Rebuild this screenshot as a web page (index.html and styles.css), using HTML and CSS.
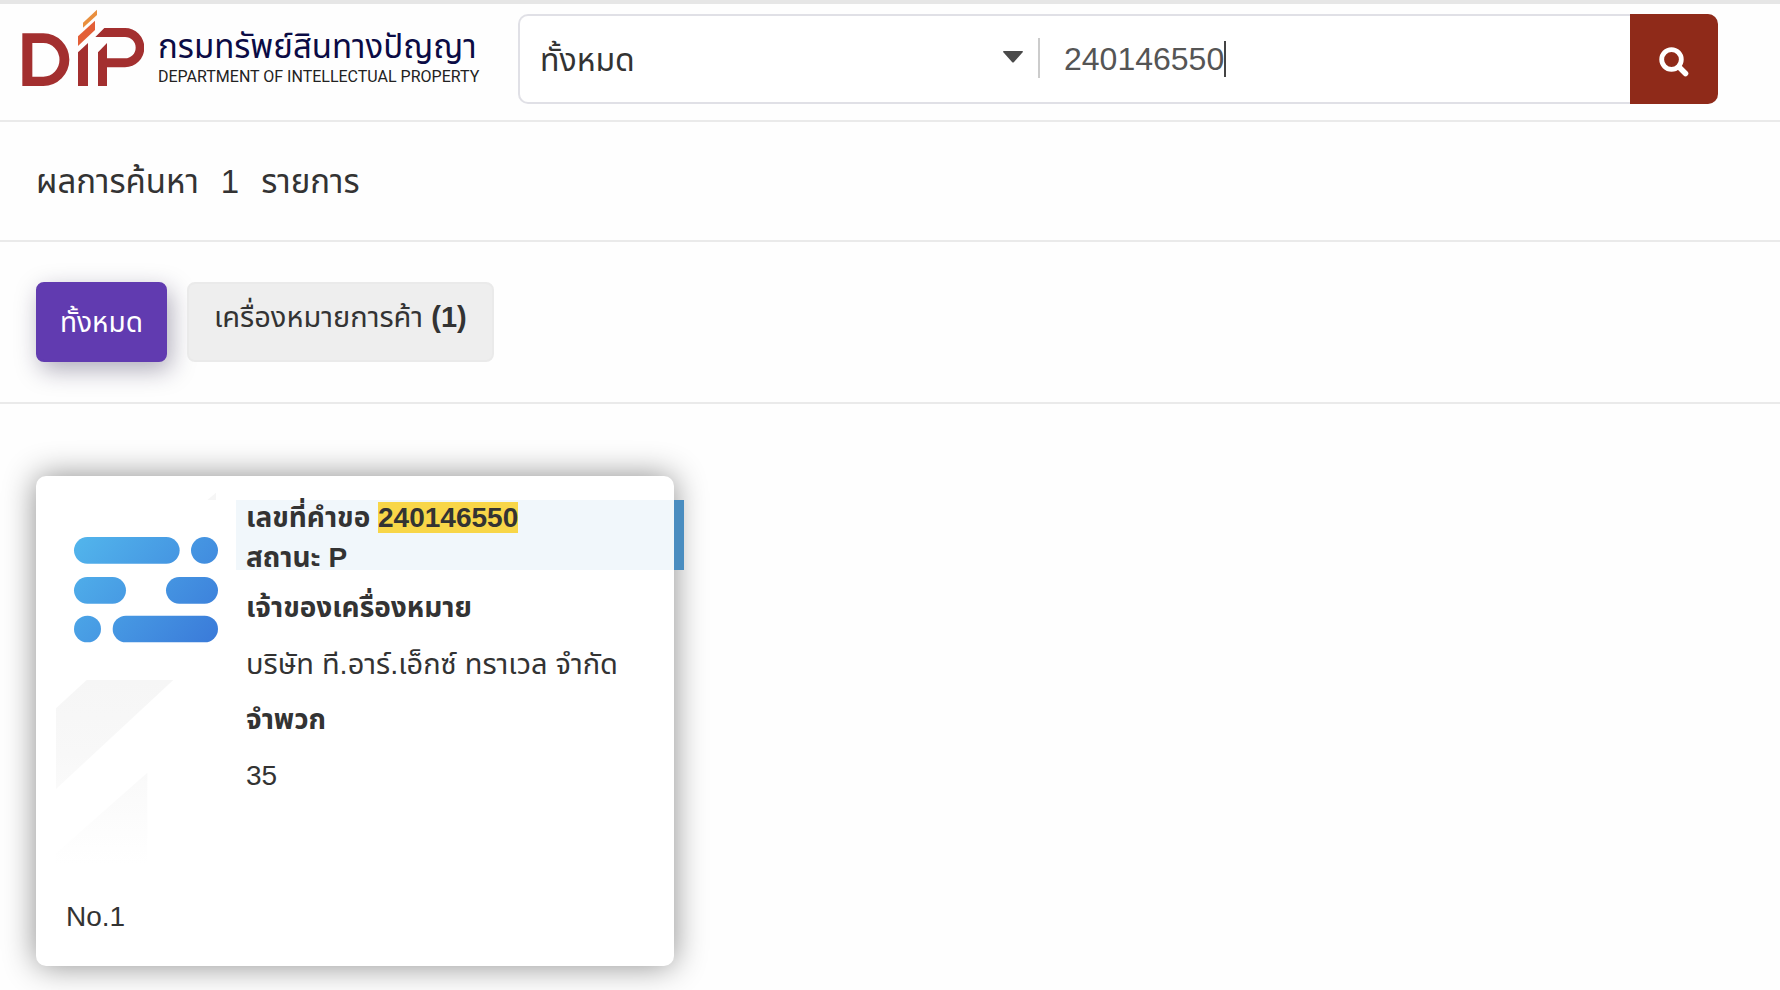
FILE: index.html
```html
<!DOCTYPE html>
<html lang="th">
<head>
    <meta charset="UTF-8">
    <meta name="viewport" content="width=device-width, initial-scale=1.0">
    <title>กรมทรัพย์สินทางปัญญา</title>
    <link rel="stylesheet" href="styles.css">
</head>
<body>
    <header class="header">
        <a class="logo" href="#">
            <svg class="logoMark" viewBox="66 27 366 234" aria-hidden="true">
                <g fill="#a32f2f">
                    <path fill-rule="evenodd" d="M67 100H130A78 79 0 0 1 130 258H67ZM97 129V230H130A48 50 0 0 0 130 129Z"/>
                    <path d="M234 157L264 129V258H234Z"/>
                    <path d="M294 157L321 129V175H375A32 32 0 0 0 375 111H286L313 84H375A58 59 0 0 1 375 202H321V258H294Z"/>
                </g>
                <path fill="#e35f37" d="M234 109L285 62V90L234 138Z"/>
                <path fill="#e98f3e" d="M249 68L291 29V45L249 83Z"/>
            </svg>
            <span class="logoText">
                <span class="logoThai">กรมทรัพย์สินทางปัญญา</span>
                <span class="logoEng">DEPARTMENT OF INTELLECTUAL PROPERTY</span>
            </span>
        </a>
        <form class="search">
            <div class="selectBox">
                <select class="type" aria-label="ประเภท">
                    <option>ทั้งหมด</option>
                </select>
                <svg class="arrow" viewBox="0 0 20 12" aria-hidden="true"><path d="M1 0H19Q21 0 19 2L11 11Q10 12 9 11L1 2Q-1 0 1 0Z" fill="#4a4a4a"/></svg>
            </div>
            <div class="keywordBox">
                <input class="keyword" type="text" value="240146550" aria-label="คำค้นหา">
                <span class="cursor"></span>
            </div>
            <button class="searchBtn" type="submit" aria-label="ค้นหา">
                <svg viewBox="0 0 30 30" aria-hidden="true">
                    <circle cx="12.500" cy="12.500" r="9.800" fill="none" stroke="#fff" stroke-width="4.800"/>
                    <path d="M20 20L26.500 26.500" stroke="#fff" stroke-width="5.500" stroke-linecap="round"/>
                </svg>
            </button>
        </form>
    </header>

    <div class="summary">
        <span>ผลการค้นหา</span>
        <span>1</span>
        <span>รายการ</span>
    </div>

    <nav class="tabs">
        <button class="tab active" type="button">ทั้งหมด</button>
        <button class="tab" type="button">เครื่องหมายการค้า <b>(1)</b></button>
    </nav>

    <main class="results">
        <article class="card">
            <div class="picture">
                <svg viewBox="108 96 486 1116" role="img" aria-label="เครื่องหมาย">
                    <defs>
                        <linearGradient id="blue" gradientUnits="userSpaceOnUse" x1="180" y1="220" x2="580" y2="560">
                            <stop offset="0" stop-color="#52b5ec"/>
                            <stop offset="1" stop-color="#3a7ad9"/>
                        </linearGradient>
                        <linearGradient id="fade" gradientUnits="userSpaceOnUse" x1="0" y1="660" x2="0" y2="1212">
                            <stop offset="0" stop-color="#f6f6f6"/>
                            <stop offset="0.4" stop-color="#f8f8f8"/>
                            <stop offset="1" stop-color="#fff"/>
                        </linearGradient>
                    </defs>
                    <path fill="#f6f6f6" d="M588 98V120H562Z"/>
                    <g fill="url(#blue)">
                        <rect x="162" y="231" width="317" height="80" rx="40"/>
                        <rect x="513" y="231" width="81" height="80" rx="40"/>
                        <rect x="162" y="351" width="156" height="80" rx="40"/>
                        <rect x="438" y="351" width="156" height="80" rx="40"/>
                        <rect x="162" y="467" width="81" height="80" rx="40"/>
                        <rect x="278" y="467" width="316" height="80" rx="40"/>
                    </g>
                    <g fill="url(#fade)">
                        <path d="M200 660H460L108 987V745Z"/>
                        <path d="M382 938V1212H108V1180Z"/>
                    </g>
                </svg>
                <span class="no">No.1</span>
            </div>
            <div class="info">
                <div class="request">
                    <b>เลขที่คำขอ <mark>240146550</mark></b>
                    <b>สถานะ P</b>
                </div>
                <b>เจ้าของเครื่องหมาย</b>
                <span class="owner">บริษัท ที.อาร์.เอ็กซ์ ทราเวล จำกัด</span>
                <b>จำพวก</b>
                <span>35</span>
            </div>
        </article>
    </main>
</body>
</html>
```
FILE: styles.css
```css
* {
    box-sizing: border-box;
}

body {
    margin: 0;
    border-top: 4px solid #e6e6e6;
    background-color: #fefefe;
    color: #333;
    font-family: "Liberation Sans", "Noto Sans Thai", sans-serif;
    font-size: 28px;
    line-height: 36px;
}

button, input, select {
    font: inherit;
    color: inherit;
    border: none;
    margin: 0;
}

.header {
    display: flex;
    height: 118px;
    padding: 10px 62px 0 22px;
    border-bottom: 2px solid #eaeaea;
}

.logo {
    display: flex;
    align-items: flex-start;
    gap: 14px;
    width: 496px;
    color: #0b0b45;
    text-decoration: none;
    white-space: nowrap;
}
.logoMark {
    width: 122px;
    height: 78px;
    margin-top: -5px;
}
.logoText {
    display: flex;
    flex-direction: column;
    padding-top: 15px;
}
.logoThai {
    font-size: 33px;
}
.logoEng {
    font-family: Roboto, sans-serif;
    font-size: 16px;
    line-height: 24px;
    color: #222;
}

.search {
    display: flex;
    flex: 1;
    height: 90px;
    border: 2px solid #e0e0e6;
    border-right: none;
    border-radius: 10px;
    background-color: #fff;
}
.selectBox {
    position: relative;
    flex: 0 0 520px;
    margin: 22px 0 24px;
    border-right: 2px solid #ccc;
}
.type {
    appearance: none;
    width: 100%;
    height: 100%;
    padding: 2px 40px 0 20px;
    background: none;
    font-size: 32px;
    line-height: 40px;
}
.arrow {
    position: absolute;
    right: 15px;
    top: 13px;
    width: 20px;
    height: 12px;
    pointer-events: none;
}
.keywordBox {
    position: relative;
    flex: 1;
}
.keyword {
    width: 100%;
    height: 86px;
    padding: 0 24px;
    background: none;
    color: #555;
    font-size: 32px;
    outline: none;
}
.cursor {
    position: absolute;
    left: 184px;
    top: 25px;
    width: 2px;
    height: 36px;
    background-color: #444;
}
.searchBtn {
    width: 88px;
    margin: -2px 0;
    padding: 14px 0 0;
    border-radius: 0 10px 10px 0;
    background-color: #8f2a19;
    cursor: pointer;
}
.searchBtn svg {
    width: 30px;
    height: 30px;
}

.summary {
    display: flex;
    gap: 22px;
    height: 120px;
    padding: 42px 36px 0;
    border-bottom: 2px solid #eaeaea;
    font-size: 33px;
}

.tabs {
    display: flex;
    gap: 20px;
    padding: 40px 36px;
    border-bottom: 2px solid #eaeaea;
}
.tab {
    height: 80px;
    padding: 0 25px 10px;
    border: 2px solid #eaeaea;
    border-radius: 8px;
    background-color: #eee;
    font-size: 29px;
    cursor: pointer;
}
.tab.active {
    padding: 2px 22px 0;
    border-color: #613bb0;
    background-color: #613bb0;
    color: #fff;
    font-size: 28px;
    box-shadow: 4px 8px 24px rgba(30, 20, 60, .35);
}

.results {
    padding: 72px 36px 24px;
}
.card {
    display: grid;
    grid-template-columns: 200px 1fr;
    width: 638px;
    min-height: 490px;
    border-radius: 10px;
    background-color: #fff;
    box-shadow: 0 0 32px rgba(0, 0, 0, .45);
}
.picture {
    display: flex;
    flex-direction: column;
    padding: 16px 18px 0 20px;
}
.picture svg {
    width: 162px;
    height: 372px;
}
.no {
    padding: 35px 10px 30px;
}
.info {
    display: flex;
    flex-direction: column;
    gap: 20px;
    padding-top: 24px;
}
.info > b, .info > span {
    padding-left: 10px;
}
.info > .owner {
    font-size: 29px;
}
.request {
    display: flex;
    flex-direction: column;
    gap: 4px;
    height: 70px;
    margin-right: -10px;
    padding-left: 10px;
    border-right: 10px solid #4a8dc0;
    background-color: #f1f7fb;
}
mark {
    background-color: #f8d648;
    color: inherit;
}
```
